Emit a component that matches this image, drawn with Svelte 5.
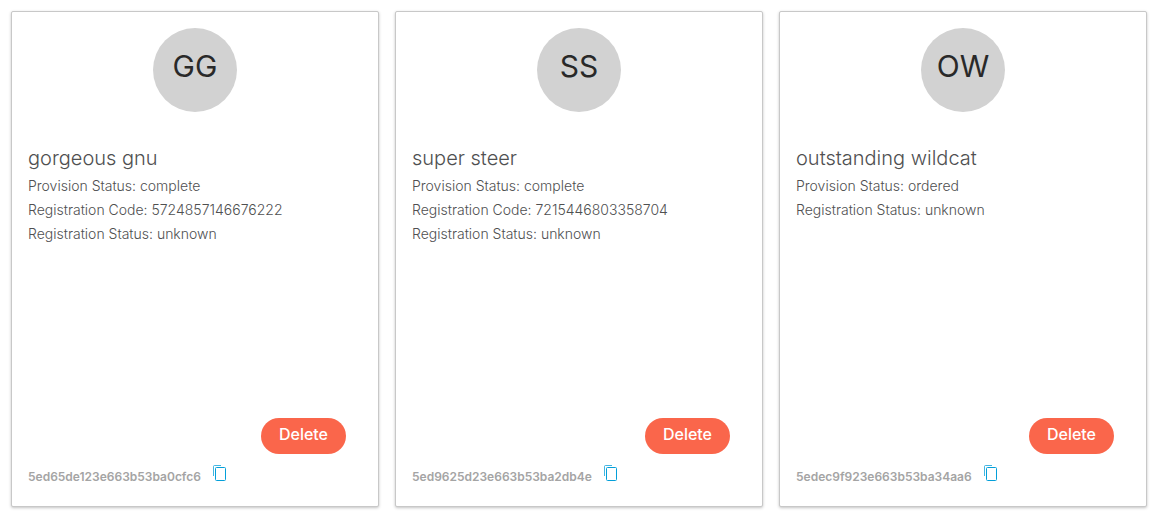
<script>
  const devices = [
    {
      id: '5ed65de123e663b53ba0cfc6',
      initials: 'GG',
      name: 'gorgeous gnu',
      details: [
        ['Provision Status', 'complete'],
        ['Registration Code', '5724857146676222'],
        ['Registration Status', 'unknown'],
      ],
    },
    {
      id: '5ed9625d23e663b53ba2db4e',
      initials: 'SS',
      name: 'super steer',
      details: [
        ['Provision Status', 'complete'],
        ['Registration Code', '7215446803358704'],
        ['Registration Status', 'unknown'],
      ],
    },
    {
      id: '5edec9f923e663b53ba34aa6',
      initials: 'OW',
      name: 'outstanding wildcat',
      details: [
        ['Provision Status', 'ordered'],
        ['Registration Status', 'unknown'],
      ],
    },
  ];
</script>

<main class="cards">
  {#each devices as device (device.id)}
    <article class="card">
      <div class="avatar">{device.initials}</div>
      <h2 class="name">{device.name}</h2>
      {#each device.details as [label, value]}
        <p class="detail">{label}: {value}</p>
      {/each}
      <div class="actions">
        <button class="delete" type="button">Delete</button>
      </div>
      <footer class="footer">
        <span class="id">{device.id}</span>
        <button class="copy" type="button" aria-label="Copy ID">
          <svg width="14" height="18" viewBox="0 0 14 18" fill="none" stroke="#049fd9" aria-hidden="true">
            <path stroke-opacity="0.75" d="M0.5 11V1.5a1 1 0 0 1 1-1H8" />
            <rect x="2.5" y="2.5" width="10" height="13" rx="1" />
          </svg>
        </button>
      </footer>
    </article>
  {/each}
</main>

<style>
  :global(body) {
    margin: 0;
    background: #fff;
  }

  .cards {
    display: grid;
    grid-template-columns: repeat(3, minmax(0, 1fr));
    gap: 16px;
    padding: 11px 14px 12px 11px;
    font-family: Inter, "Liberation Sans", sans-serif;
    color: #4f5051;
  }

  .card {
    display: flex;
    flex-direction: column;
    box-sizing: border-box;
    min-height: 496px;
    padding: 16px;
    border: 1px solid #c8c8c8;
    border-radius: 2px;
    background: #fff;
    box-shadow: 0 1px 3px rgba(0, 0, 0, 0.24);
  }

  .avatar {
    box-sizing: border-box;
    width: 84px;
    height: 84px;
    margin-bottom: 32px;
    padding-bottom: 8px;
    align-self: center;
    border-radius: 50%;
    background: #d2d2d2;
    color: #292929;
    font-size: 30px;
    line-height: 76px;
    text-align: center;
  }

  .name {
    margin: 0 0 2px;
    font-size: 20px;
    font-weight: 300;
    line-height: 28px;
  }

  .detail {
    margin: 0;
    font-size: 14px;
    font-weight: 300;
    line-height: 24px;
  }

  .actions {
    display: flex;
    justify-content: flex-end;
    margin-top: auto;
    padding-right: 16px;
  }

  .delete {
    height: 36px;
    padding: 0 18px 4px;
    border: 0;
    border-radius: 18px;
    background: #fa664b;
    color: #fff;
    font: 500 16px/32px Inter, "Liberation Sans", sans-serif;
    cursor: pointer;
  }

  .footer {
    display: flex;
    align-items: flex-start;
    gap: 12px;
    padding-top: 11px;
  }

  .id {
    padding: 2px 0 3px;
    color: #a4a4a4;
    font-size: 12px;
    font-weight: 600;
    line-height: 20px;
  }

  .copy {
    display: flex;
    padding: 0;
    border: 0;
    background: none;
    cursor: pointer;
  }
</style>
